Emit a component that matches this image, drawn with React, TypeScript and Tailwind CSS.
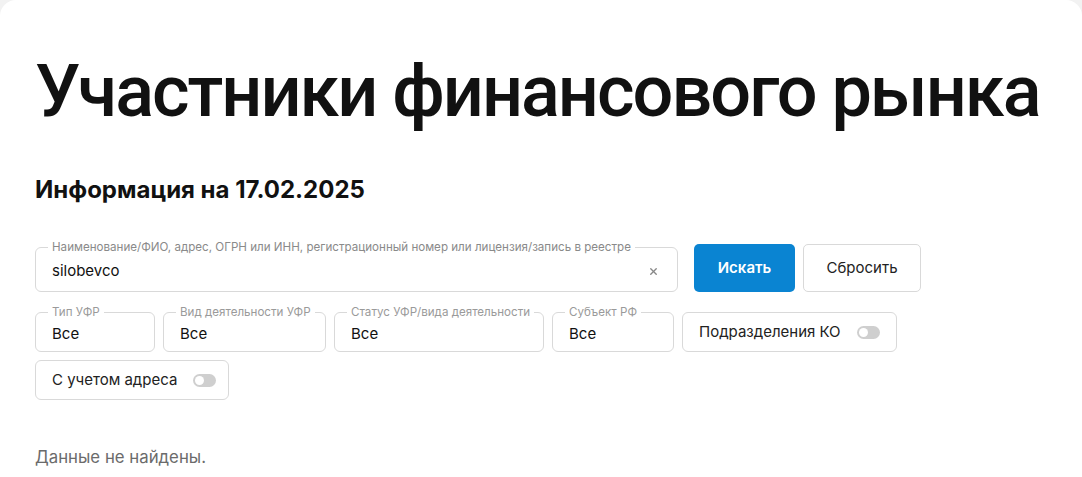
import { X } from "lucide-react";

const font = { fontFamily: "Inter, 'Noto Sans', sans-serif" };

function Field({ label, value, className }: { label: string; value: string; className: string }) {
  return (
    <div className={`relative h-10 rounded-md border border-[#d9d9d9] bg-white px-4 ${className}`}>
      <span className="absolute -top-[8px] left-3 whitespace-nowrap bg-white px-1 text-[11.6px] leading-[14px] text-[#9a9a9a]">
        {label}
      </span>
      <div className="flex h-full items-center pt-1 text-[15px] text-[#111]">{value}</div>
    </div>
  );
}

function Toggle({ label, className }: { label: string; className: string }) {
  return (
    <div className={`flex h-10 items-center gap-[16px] whitespace-nowrap rounded-md border border-[#d9d9d9] bg-white px-4 ${className}`}>
      <span className="text-[15px] text-[#222]">{label}</span>
      <span className="relative h-[13px] w-[23px] shrink-0 rounded-full bg-[#cfcfcf]">
        <span className="absolute left-[2px] top-[2px] h-[9px] w-[9px] rounded-full bg-white" />
      </span>
    </div>
  );
}

export default function App() {
  return (
    <div className="min-h-screen bg-[#f2f2f2]" style={font}>
      <div className="h-[477px] overflow-hidden rounded-t-2xl bg-white px-[35px] pt-[47px]">
        <h1 className="whitespace-nowrap font-['Roboto',sans-serif] text-[72px] font-medium leading-[89px] tracking-[-2px] text-[#111]">
          Участники финансового рынка
        </h1>

        <h2 className="mt-[40px] text-[24px] font-bold leading-[28px] text-[#111]">
          Информация на 17.02.2025
        </h2>

        {/* Search */}
        <div className="mt-[40px] flex items-start gap-2">
          <div className="relative mt-[3px] flex h-[45px] w-[643px] items-center rounded-md border border-[#d9d9d9] bg-white pl-4 pr-4">
            <span className="absolute -top-[8px] left-3 whitespace-nowrap bg-white px-1 text-[11.6px] leading-[14px] text-[#8a8a8a]">
              Наименование/ФИО, адрес, ОГРН или ИНН, регистрационный номер или лицензия/запись в реестре
            </span>
            <span className="flex-1 pt-1 text-[15px] text-[#111]">silobevco</span>
            <X size={11} strokeWidth={3} className="mr-[2px] mt-1 text-[#888]" />
          </div>
          <button className="ml-2 h-12 w-[101px] rounded-[5px] bg-[#0a84d2] text-[15px] font-semibold text-white">
            Искать
          </button>
          <button className="h-12 w-[118px] rounded-[5px] border border-[#d9d9d9] bg-white text-[15px] text-[#222]">
            Сбросить
          </button>
        </div>

        {/* Filters */}
        <div className="mt-[20px] flex w-[870px] flex-wrap gap-2">
          <Field label="Тип УФР" value="Все" className="w-[120px]" />
          <Field label="Вид деятельности УФР" value="Все" className="w-[163px]" />
          <Field label="Статус УФР/вида деятельности" value="Все" className="w-[210px]" />
          <Field label="Субъект РФ" value="Все" className="w-[122px]" />
          <Toggle label="Подразделения КО" className="w-[215px]" />
          <Toggle label="С учетом адреса" className="w-[194px]" />
        </div>

        <p className="mt-[45px] text-[16.8px] text-[#6b6b6b]">Данные не найдены.</p>
      </div>
    </div>
  );
}
